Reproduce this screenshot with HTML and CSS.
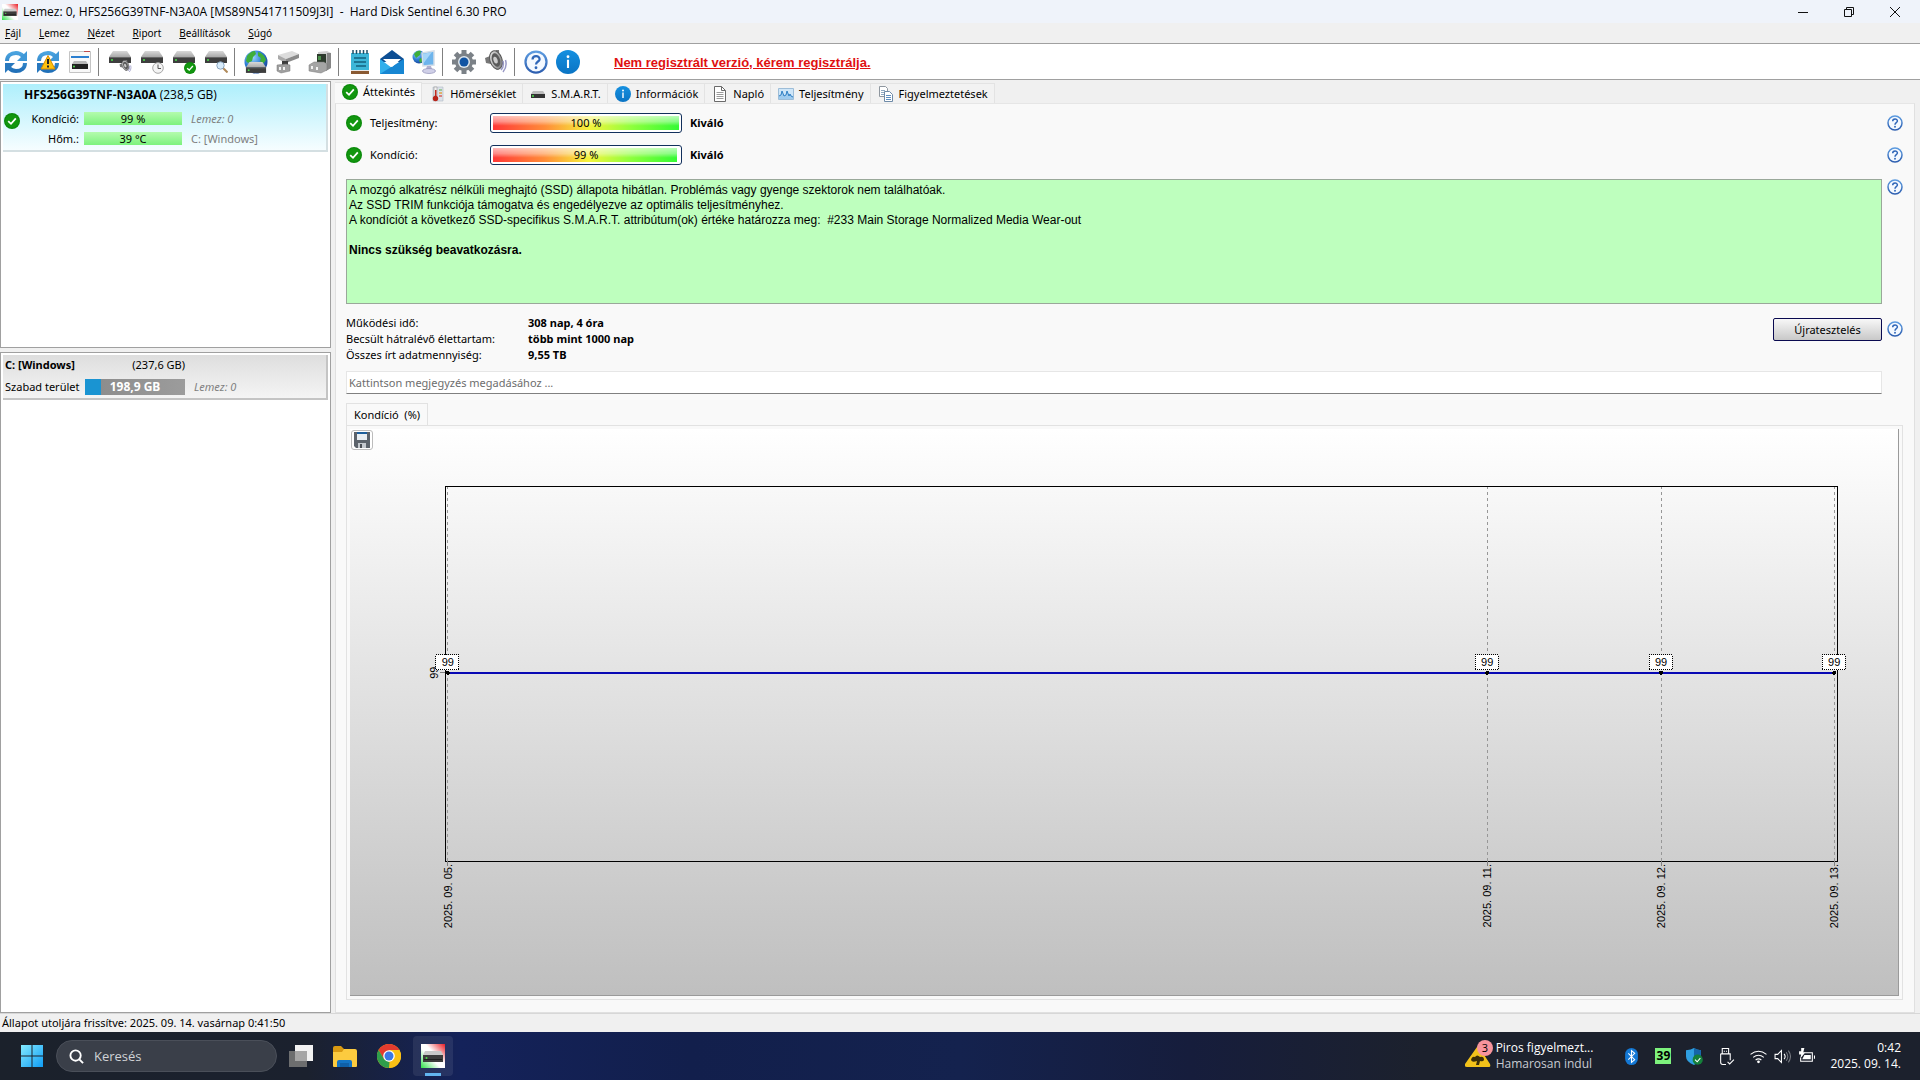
FILE: index.html
```html
<!DOCTYPE html>
<html lang="hu">
<head>
    <meta charset="utf-8">
    <meta name="viewport" content="width=device-width, initial-scale=1">
    <title>Hard Disk Sentinel 6.30 PRO</title>
    <link rel="stylesheet" href="styles.css">
</head>
<body>

<!-- icon sprite -->
<svg class="sprite" aria-hidden="true">
    <defs>
        <linearGradient id="g-blue" x1="0" y1="0" x2="0" y2="1"><stop offset="0" stop-color="#4aa3df"/><stop offset="1" stop-color="#2170b8"/></linearGradient>
        <linearGradient id="g-info" x1="0" y1="0" x2="0" y2="1"><stop offset="0" stop-color="#1590e0"/><stop offset="1" stop-color="#0a74c4"/></linearGradient>
        <linearGradient id="g-disk" x1="0" y1="0" x2="0" y2="1"><stop offset="0" stop-color="#d8d8d8"/><stop offset="1" stop-color="#a8a8a8"/></linearGradient>
        <linearGradient id="g-gray" x1="0" y1="0" x2="1" y2="1"><stop offset="0" stop-color="#eeeeee"/><stop offset="1" stop-color="#707070"/></linearGradient>
        <linearGradient id="g-help" x1="0" y1="0" x2="0" y2="1"><stop offset="0" stop-color="#5c9be0"/><stop offset="1" stop-color="#2e5fb0"/></linearGradient>
        <linearGradient id="g-app" x1="0" y1="1" x2="1" y2="0"><stop offset="0" stop-color="#2fe04a"/><stop offset=".42" stop-color="#ffffff"/><stop offset=".58" stop-color="#ffffff"/><stop offset="1" stop-color="#e81c24"/></linearGradient>
        <linearGradient id="g-win" x1="0" y1="0" x2="1" y2="1"><stop offset="0" stop-color="#84eaff"/><stop offset="1" stop-color="#0f9cf4"/></linearGradient>
        <radialGradient id="g-globe" cx=".35" cy=".3" r=".8"><stop offset="0" stop-color="#9fd8ff"/><stop offset=".5" stop-color="#2f7fd6"/><stop offset="1" stop-color="#123a8c"/></radialGradient>
    </defs>

    <symbol id="i-app" viewBox="0 0 24 24">
        <path fill="url(#g-app)" d="M0 0h24v24H0z"/>
        <path fill="#c9c9c9" d="M4 7h16l2 4H2z"/>
        <path fill="#3c3c3c" d="M2 11h20v7H2z"/>
        <path fill="#1e1e1e" d="M3 15h18v1H3z"/>
        <circle cx="5.500" cy="14" r="1" fill="#4be04b"/>
    </symbol>
    <symbol id="i-sync" viewBox="0 0 24 24">
        <path fill="none" stroke="url(#g-blue)" stroke-width="4" d="M3 11c0-5 4-8 9-8 3 0 5 1 7 3M21 13c0 5-4 8-9 8-3 0-5-1-7-3"/>
        <path fill="#3f98d8" d="M23 1v10H13z"/>
        <path fill="#2878be" d="M1 23V13h10z"/>
    </symbol>
    <symbol id="i-warn" viewBox="0 0 24 24">
        <path fill="#ffc20e" stroke="#d98c00" d="M12 5.500 19 19H5z" stroke-linejoin="round"/>
        <path stroke="#222" stroke-width="2" d="M12 9v5M12 15.500v2"/>
    </symbol>
    <symbol id="i-panel" viewBox="0 0 24 24">
        <path fill="#f8f8f8" stroke="#c4c4c4" d="M1.500 1.500h21v21h-21z"/>
        <path fill="#bf4a4a" d="M16 1h6v1h-6z"/>
        <path fill="#2b7fd0" d="M3 6h18v2H3z"/>
        <path fill="#b8b8b8" d="M6 11h12l2 3H4z"/>
        <path fill="#222" d="M4 14h16v5H4z"/>
        <circle cx="6" cy="16.500" r="1" fill="#54e054"/>
    </symbol>
    <symbol id="i-disk" viewBox="0 0 24 24">
        <path fill="url(#g-disk)" d="M5 1h14l4 6H1z"/>
        <path fill="#3e3e3e" d="M1 7h22v6H1z"/>
        <path fill="#666" d="M1 7h22v1H1z"/>
        <circle cx="4" cy="10" r="1" fill="#4be04b"/>
    </symbol>
    <symbol id="i-smalldisk" viewBox="0 0 16 16">
        <path fill="#bdbdbd" d="M3 5h10l2 3H1z"/>
        <path fill="#333" d="M1 8h14v4H1z"/>
        <circle cx="3" cy="10" r="1" fill="#4be04b"/>
    </symbol>
    <symbol id="i-speaker" viewBox="0 0 24 24">
        <path fill="#777" d="M1 8l5-2 6-6 3 0 1 18-3 2-6-6-5-1z"/>
        <ellipse cx="12" cy="10" rx="6" ry="9.500" fill="url(#g-gray)" stroke="#555" transform="rotate(-18 12 10)"/>
        <ellipse cx="12" cy="10" rx="4" ry="7" fill="#5a5a5a" transform="rotate(-18 12 10)"/>
        <ellipse cx="11.500" cy="10" rx="2" ry="3.500" fill="#ccc" transform="rotate(-18 12 10)"/>
        <path fill="none" stroke="#9a9ac6" stroke-width="1.500" d="M19 11c1 4 0 7-2 9M21.500 10c1.500 5 0 9-2.500 12"/>
    </symbol>
    <symbol id="i-clock" viewBox="0 0 12 12">
        <circle cx="6" cy="6" r="5.300" fill="#f4f4f4" stroke="#a6a6a6"/>
        <path fill="none" stroke="#555" d="M6 2.500V6.500H9"/>
    </symbol>
    <symbol id="i-check" viewBox="0 0 16 16">
        <circle cx="8" cy="8" r="8" fill="#0b8a0b"/>
        <circle cx="8" cy="8" r="6.800" fill="#12960f"/>
        <path fill="none" stroke="#fff" stroke-width="1.800" d="M4.200 8.200 7 10.800 11.800 5.400"/>
    </symbol>
    <symbol id="i-lens" viewBox="0 0 12 12">
        <path stroke="#b08a5a" stroke-width="2" d="M7 7l4.500 4.500"/>
        <circle cx="4.500" cy="4.500" r="3.700" fill="#d8ecfb" stroke="#8aa4bd"/>
    </symbol>
    <symbol id="i-globe" viewBox="0 0 24 24">
        <circle cx="12" cy="12" r="11.500" fill="url(#g-globe)"/>
        <path fill="#3fae3a" d="M3 6c2-3 5-5 8-5l1 3-3 3-1 4-4 2-2-2zM14 2c4 1 7 4 8 8l-3 4-3-3 1-3-3-2z"/>
    </symbol>
    <symbol id="i-plug" viewBox="0 0 24 24">
        <path fill="#dcdcdc" d="M2 5l14-4 7 3-13 5z"/>
        <path fill="#a9a9a9" d="M2 5l8 4v4l-8-4z"/>
        <path fill="#8a8a8a" d="M10 9l13-5v4l-13 5z"/>
        <path fill="#3c3c3c" d="M6 11h6v4H6z"/>
        <path fill="#9f9f9f" stroke="#777" stroke-width=".5" d="M1 15l9-1 4 1v6l-9 2-4-2z"/>
        <path fill="#f2f2f2" d="M3 17h2v3H3zM7 17h2v3H7z"/>
    </symbol>
    <symbol id="i-plug2" viewBox="0 0 24 24">
        <path fill="#cfcfcf" d="M10 2l9-1 4 2v15l-6 3-7-3z"/>
        <path fill="#868686" d="M19 3l4 0v15l-5 3z"/>
        <path fill="#2d3a2d" d="M9 4h9v9H9z"/>
        <path fill="#4c914c" d="M10 6h3v4h-3z"/>
        <path fill="#a5a5a5" stroke="#777" stroke-width=".5" d="M1 15l5-3h10l3 2v6l-6 3-12-2z"/>
        <path fill="#f2f2f2" d="M3 16h2v3H3zM8 17h2v3H8z"/>
    </symbol>
    <symbol id="i-note" viewBox="0 0 24 24">
        <path fill="#3cb6d8" d="M3 3h18v18H3z"/>
        <path fill="#8a5a33" d="M3 21h18v3H3z"/>
        <path fill="#e9e9e9" d="M3 20h18v1H3z"/>
        <path stroke="#1e5068" stroke-width="1.500" d="M5 0v4M8.500 0v4M12 0v4M15.500 0v4M19 0v4"/>
        <path stroke="#13617e" stroke-width="1.500" d="M6 8h12M6 12h12M8 16h10"/>
    </symbol>
    <symbol id="i-mail" viewBox="0 0 24 24">
        <path fill="#0e4f94" d="M0 9 12 0l12 9v3H0z"/>
        <path fill="#32b0ec" d="M0 9l12 9 12-9v15H0z"/>
        <path fill="#1786d2" d="M0 24 24 9v15z"/>
        <path fill="#fff" d="M3 9h18l-9 8z"/>
    </symbol>
    <symbol id="i-net" viewBox="0 0 24 24">
        <circle cx="7" cy="7" r="6.500" fill="url(#g-globe)"/>
        <path fill="#3fae3a" d="M2 4c2-3 5-4 7-3l-1 4-4 3zM8 8l3 1-2 4-2-2z"/>
        <path fill="#6db4ec" stroke="#d3dde8" stroke-width="1.500" d="M10 3l12-2v14l-11 1z"/>
        <path fill="#a5d5f8" d="M11 14 11 4l9-2z"/>
        <path fill="#b0b0d0" d="M15 16h4l1 3h-6z"/>
        <ellipse cx="17" cy="21" rx="6.500" ry="2.500" fill="#d0d0e8" stroke="#9090b8" stroke-width=".7"/>
    </symbol>
    <symbol id="i-gear" viewBox="0 0 24 24">
        <circle cx="12" cy="12" r="9" fill="#7b8187"/>
        <path stroke="#7b8187" stroke-width="5" d="M12 0v24M0 12h24M3.500 3.500l17 17M20.500 3.500l-17 17"/>
        <circle cx="12" cy="12" r="6" fill="#dfe7ee"/>
        <circle cx="12" cy="12" r="4.500" fill="#1154a3"/>
    </symbol>
    <symbol id="i-help" viewBox="0 0 16 16">
        <circle cx="8" cy="8" r="7" fill="#f4f9ff" stroke="url(#g-help)" stroke-width="1.500"/>
        <path fill="none" stroke="#2f66b8" stroke-width="1.500" d="M5.700 6.300c0-3 4.700-3 4.700-.2C10.400 7.700 8 7.700 8 9.700"/>
        <circle cx="8" cy="11.800" r=".95" fill="#2f66b8"/>
    </symbol>
    <symbol id="i-info" viewBox="0 0 16 16">
        <circle cx="8" cy="8" r="8" fill="url(#g-info)"/>
        <path fill="#fff" d="M7.300 6.500h1.400V12H7.300z"/>
        <circle cx="8" cy="4.500" r=".95" fill="#fff"/>
    </symbol>
    <symbol id="i-temp" viewBox="0 0 16 16">
        <path fill="#dce2ea" stroke="#b0b8c2" stroke-width=".6" d="M4 1h10v14H4z"/>
        <path fill="#9cc89c" d="M10 3h3v2h-3z"/>
        <path fill="#e0b36a" d="M10 6h3v2h-3z"/>
        <path fill="#d98080" d="M10 9h3v2h-3z"/>
        <path fill="#f2f2f2" stroke="#999" stroke-width=".6" d="M5 1h3v9H5z"/>
        <path fill="#c22a1e" d="M6 4h1.500v7H6z"/>
        <circle cx="6.500" cy="12.500" r="2.700" fill="#b8251a"/>
    </symbol>
    <symbol id="i-doc" viewBox="0 0 16 16">
        <path fill="#fff" stroke="#6a6a6a" d="M2.500.5h7l4 4v11h-11z"/>
        <path fill="none" stroke="#6a6a6a" d="M9.500.5v4h4"/>
        <path stroke="#9a9a9a" d="M4.500 6.500h7M4.500 8.500h7M4.500 10.500h7M4.500 12.500h7"/>
    </symbol>
    <symbol id="i-graph" viewBox="0 0 16 16">
        <path fill="#cfe6f8" stroke="#9dbdd8" d="M.5 2.500h15v11H.5z"/>
        <path fill="#9fcbee" d="M1 13v-3l2-1 1-4 2 5 2-1 1-4 2 5 1-2 1 2 2 1v2z"/>
        <path fill="none" stroke="#2f7fc4" d="M1 10l2-1 1-4 2 5 2-1 1-4 2 5 1-2 1 2 2 1"/>
    </symbol>
    <symbol id="i-copy" viewBox="0 0 16 16">
        <path fill="#fff" stroke="#8f979f" d="M1.500.5h6l2 2v8h-8z"/>
        <path stroke="#8fa8c0" d="M3 4.500h4M3 6.500h3M3 8.500h3"/>
        <path fill="#fff" stroke="#6f8ba8" d="M6.500 5.500h5l3 3v7h-8z"/>
        <path stroke="#5f8fc0" d="M8 9.500h5M8 11.500h5M8 13.500h5"/>
    </symbol>
    <symbol id="i-save" viewBox="0 0 16 16">
        <path fill="#5c636b" d="M0 0h16v16H2l-2-2z"/>
        <path fill="#1d5f9c" d="M3 0h10v2H3z"/>
        <path fill="#e8eef3" d="M3 2h10v6H3z"/>
        <path fill="#c4c9ce" d="M4 11h8v5H4z"/>
        <path fill="#4a4f55" d="M6 12h2v4H6z"/>
    </symbol>
</svg>

<header class="titlebar">
    <svg class="app-icon"><use href="#i-app"/></svg>
    <span class="title">Lemez: 0, HFS256G39TNF-N3A0A [MS89N541711509J3I] &nbsp;-&nbsp; Hard Disk Sentinel 6.30 PRO</span>
    <div class="win-buttons">
        <button type="button" aria-label="Kis méret"><svg viewBox="0 0 10 10"><path d="M0 5.500h10"/></svg></button>
        <button type="button" aria-label="Előző méret"><svg viewBox="0 0 10 10"><path d="M.5 2.500h7v7h-7zM2.500 2.500V.5h7v7h-2"/></svg></button>
        <button type="button" aria-label="Bezárás"><svg viewBox="0 0 10 10"><path d="M0 0l10 10M10 0 0 10"/></svg></button>
    </div>
</header>

<nav class="menubar">
    <button type="button"><u>F</u>ájl</button>
    <button type="button"><u>L</u>emez</button>
    <button type="button"><u>N</u>ézet</button>
    <button type="button"><u>R</u>iport</button>
    <button type="button"><u>B</u>eállítások</button>
    <button type="button"><u>S</u>úgó</button>
</nav>

<div class="toolbar">
    <button type="button" aria-label="Frissítés"><svg viewBox="0 0 24 24"><use href="#i-sync"/></svg></button>
    <button type="button" aria-label="Figyelmeztetések frissítése"><svg viewBox="0 0 24 24"><use href="#i-sync"/><use href="#i-warn"/></svg></button>
    <button type="button" aria-label="Nézet"><svg viewBox="0 0 24 24"><use href="#i-panel"/></svg></button>
    <span class="sep"></span>
    <button type="button" aria-label="Hang"><svg viewBox="0 0 24 24"><use href="#i-disk"/><use href="#i-speaker" x="11" y="10" width="13" height="13"/></svg></button>
    <button type="button" aria-label="Időzítés"><svg viewBox="0 0 24 24"><use href="#i-disk"/><use href="#i-clock" x="12" y="12" width="12" height="12"/></svg></button>
    <button type="button" aria-label="Teszt"><svg viewBox="0 0 24 24"><use href="#i-disk"/><use href="#i-check" x="12" y="12" width="12" height="12"/></svg></button>
    <button type="button" aria-label="Felülvizsgálat"><svg viewBox="0 0 24 24"><use href="#i-disk"/><use href="#i-lens" x="12" y="11" width="12" height="12"/></svg></button>
    <span class="sep"></span>
    <button type="button" aria-label="Hálózati lemez"><svg viewBox="0 0 24 24"><use href="#i-globe"/><use href="#i-disk" x="1" y="11" width="22" height="22"/></svg></button>
    <button type="button" aria-label="Csatlakoztatás"><svg viewBox="0 0 24 24"><use href="#i-plug"/></svg></button>
    <button type="button" aria-label="Leválasztás"><svg viewBox="0 0 24 24"><use href="#i-plug2"/></svg></button>
    <span class="sep"></span>
    <button type="button" aria-label="Riport"><svg viewBox="0 0 24 24"><use href="#i-note"/></svg></button>
    <button type="button" aria-label="E-mail"><svg viewBox="0 0 24 24"><use href="#i-mail"/></svg></button>
    <button type="button" aria-label="Hálózat"><svg viewBox="0 0 24 24"><use href="#i-net"/></svg></button>
    <span class="sep"></span>
    <button type="button" aria-label="Beállítások"><svg viewBox="0 0 24 24"><use href="#i-gear"/></svg></button>
    <button type="button" aria-label="Hangjelzés"><svg viewBox="0 0 24 24"><use href="#i-speaker"/></svg></button>
    <span class="sep"></span>
    <button type="button" aria-label="Súgó"><svg viewBox="0 0 24 24"><use href="#i-help" width="24" height="24"/></svg></button>
    <button type="button" aria-label="Információ"><svg viewBox="0 0 24 24"><use href="#i-info" width="24" height="24"/></svg></button>
    <a class="register" href="#">Nem regisztrált verzió, kérem regisztrálja.</a>
</div>

<div class="workspace">
    <aside class="sidebar">
        <section class="list disks">
            <div class="disk">
                <div class="disk-name"><b>HFS256G39TNF-N3A0A</b> (238,5 GB)</div>
                <div class="disk-body">
                    <svg class="ico16"><use href="#i-check"/></svg>
                    <div class="disk-grid">
                        <span class="key">Kondíció:</span><span class="bar">99 %</span><i>Lemez: 0</i>
                        <span class="key">Hőm.:</span><span class="bar">39 °C</span><span class="dim">C: [Windows]</span>
                    </div>
                </div>
            </div>
        </section>
        <section class="list volumes">
            <div class="volume">
                <b>C: [Windows]</b><span class="size">(237,6 GB)</span><span></span>
                <span>Szabad terület</span><span class="usage">198,9 GB</span><i>Lemez: 0</i>
            </div>
        </section>
    </aside>

    <main class="main">
        <div class="tabs" role="tablist">
            <button type="button" role="tab" class="tab active" aria-selected="true"><svg class="ico16"><use href="#i-check"/></svg>Áttekintés</button>
            <button type="button" role="tab" class="tab"><svg class="ico16"><use href="#i-temp"/></svg>Hőmérséklet</button>
            <button type="button" role="tab" class="tab"><svg class="ico16"><use href="#i-smalldisk"/></svg>S.M.A.R.T.</button>
            <button type="button" role="tab" class="tab"><svg class="ico16"><use href="#i-info"/></svg>Információk</button>
            <button type="button" role="tab" class="tab"><svg class="ico16"><use href="#i-doc"/></svg>Napló</button>
            <button type="button" role="tab" class="tab"><svg class="ico16"><use href="#i-graph"/></svg>Teljesítmény</button>
            <button type="button" role="tab" class="tab"><svg class="ico16"><use href="#i-copy"/></svg>Figyelmeztetések</button>
        </div>

        <div class="page">
            <div class="status-row">
                <svg class="ico16"><use href="#i-check"/></svg>
                <span class="status-label">Teljesítmény:</span>
                <div class="meter"><div class="fill" style="width:100%"></div><span>100 %</span></div>
                <b>Kiváló</b>
                <button type="button" class="help" aria-label="Súgó"><svg class="ico16"><use href="#i-help"/></svg></button>
            </div>
            <div class="status-row">
                <svg class="ico16"><use href="#i-check"/></svg>
                <span class="status-label">Kondíció:</span>
                <div class="meter"><div class="fill" style="width:99%"></div><span>99 %</span></div>
                <b>Kiváló</b>
                <button type="button" class="help" aria-label="Súgó"><svg class="ico16"><use href="#i-help"/></svg></button>
            </div>

            <div class="with-help">
                <div class="report">
                    <p>A mozgó alkatrész nélküli meghajtó (SSD) állapota hibátlan. Problémás vagy gyenge szektorok nem találhatóak.</p>
                    <p>Az SSD TRIM funkciója támogatva és engedélyezve az optimális teljesítményhez.</p>
                    <p>A kondíciót a következő SSD-specifikus S.M.A.R.T. attribútum(ok) értéke határozza meg: &nbsp;#233 Main Storage Normalized Media Wear-out</p>
                    <p class="verdict"><b>Nincs szükség beavatkozásra.</b></p>
                </div>
                <button type="button" class="help" aria-label="Súgó"><svg class="ico16"><use href="#i-help"/></svg></button>
            </div>

            <div class="facts-row">
                <dl class="facts">
                    <dt>Működési idő:</dt><dd>308 nap, 4 óra</dd>
                    <dt>Becsült hátralévő élettartam:</dt><dd>több mint 1000 nap</dd>
                    <dt>Összes írt adatmennyiség:</dt><dd>9,55 TB</dd>
                </dl>
                <button type="button" class="retest">Újratesztelés</button>
                <button type="button" class="help" aria-label="Súgó"><svg class="ico16"><use href="#i-help"/></svg></button>
            </div>

            <input class="comment" type="text" aria-label="Megjegyzés" placeholder="Kattintson megjegyzés megadásához ...">

            <div class="chart-tabs" role="tablist">
                <button type="button" role="tab" class="chart-tab" aria-selected="true">Kondíció &nbsp;(%)</button>
            </div>
            <div class="chart-frame">
                <div class="chart">
                    <button type="button" class="save" aria-label="Mentés"><svg class="ico16"><use href="#i-save"/></svg></button>
                    <svg class="plot">
                        <g class="grid">
                            <line x1="0.2%" y1="0" x2="0.2%" y2="100%"/>
                            <line x1="74.87%" y1="0" x2="74.87%" y2="100%"/>
                            <line x1="87.36%" y1="0" x2="87.36%" y2="100%"/>
                            <line x1="99.8%" y1="0" x2="99.8%" y2="100%"/>
                        </g>
                        <rect class="frame" width="100%" height="100%"/>
                        <line class="series" x1="0.2%" y1="49.8%" x2="99.8%" y2="49.8%"/>
                        <!-- value axis -->
                        <svg x="0" y="49.8%" class="pt"><line class="tick" x1="-5" x2="0"/><text class="axis" transform="rotate(-90)" x="-6" y="-7">99</text></svg>
                        <!-- points -->
                        <svg x="0.2%" y="49.8%" class="pt"><rect class="box" x="-12" y="-18" width="23" height="15"/><text class="val" y="-7">99</text><circle r="2"/></svg>
                        <svg x="74.87%" y="49.8%" class="pt"><rect class="box" x="-12" y="-18" width="23" height="15"/><text class="val" y="-7">99</text><circle r="2"/></svg>
                        <svg x="87.36%" y="49.8%" class="pt"><rect class="box" x="-12" y="-18" width="23" height="15"/><text class="val" y="-7">99</text><circle r="2"/></svg>
                        <svg x="99.8%" y="49.8%" class="pt"><rect class="box" x="-12" y="-18" width="23" height="15"/><text class="val" y="-7">99</text><circle r="2"/></svg>
                        <!-- dates -->
                        <svg x="0.2%" y="100%" class="pt"><line class="tick" y2="5"/><text class="date" transform="rotate(-90)" x="-3" y="4">2025. 09. 05.</text></svg>
                        <svg x="74.87%" y="100%" class="pt"><line class="tick" y2="5"/><text class="date" transform="rotate(-90)" x="-3" y="4">2025. 09. 11.</text></svg>
                        <svg x="87.36%" y="100%" class="pt"><line class="tick" y2="5"/><text class="date" transform="rotate(-90)" x="-3" y="4">2025. 09. 12.</text></svg>
                        <svg x="99.8%" y="100%" class="pt"><line class="tick" y2="5"/><text class="date" transform="rotate(-90)" x="-3" y="4">2025. 09. 13.</text></svg>
                    </svg>
                </div>
            </div>
        </div>
    </main>
</div>

<footer class="statusbar">Állapot utoljára frissítve: 2025. 09. 14. vasárnap 0:41:50</footer>

<div class="taskbar">
    <button type="button" class="task start" aria-label="Start">
        <svg viewBox="0 0 24 24"><path fill="url(#g-win)" d="M1 1h10.500v10.500H1zM12.500 1H23v10.500H12.500zM1 12.500h10.500V23H1zM12.500 12.500H23V23H12.500z"/></svg>
    </button>
    <label class="search">
        <svg viewBox="0 0 16 16"><circle cx="7" cy="7" r="5.500"/><path d="M11 11l4 4"/></svg>
        <input type="text" placeholder="Keresés" aria-label="Keresés">
    </label>
    <button type="button" class="task" aria-label="Feladatnézet">
        <svg viewBox="0 0 24 24"><path fill="#f2f2f2" d="M6 1h18v16H6z"/><path fill="#777" opacity=".9" d="M0 7h18v16H0z"/><path fill="#a6a6a6" d="M6 7h12v10H6z"/></svg>
    </button>
    <button type="button" class="task" aria-label="Fájlkezelő">
        <svg viewBox="0 0 24 24"><path fill="#d99a12" d="M0 4q0-2 2-2h6l3 3v5H0z"/><path fill="#fccb3f" d="M0 8h9l2-3h11q2 0 2 2v15q0 1-1 1H1q-1 0-1-1z"/><path fill="#1373c4" d="M4 23v-5q0-2 2-2h11q2 0 2 2v5z"/><path fill="#0f5fa8" d="M7 19h9v4H7z"/></svg>
    </button>
    <button type="button" class="task" aria-label="Chrome">
        <svg viewBox="0 0 24 24"><circle cx="12" cy="12" r="12" fill="#fbc116"/><path fill="#e33b2e" d="M1.600 6A12 12 0 0 1 22.400 6H12v6l-5.200 3z"/><path fill="#2f9e4b" d="M1.600 6 7 15l5 3 .5 0L12 24A12 12 0 0 1 1.600 6z"/><path fill="#fbc116" d="M22.400 6A12 12 0 0 1 12 24l5.200-9L16 6z"/><circle cx="12" cy="12" r="5.800" fill="#fff"/><circle cx="12" cy="12" r="4.500" fill="#3b78e7"/></svg>
    </button>
    <button type="button" class="task current" aria-label="Hard Disk Sentinel"><svg><use href="#i-app"/></svg></button>

    <button type="button" class="alert">
        <svg viewBox="0 0 28 28"><path fill="#f2c21a" d="M12 7q1-2 2 0l11 17q1 3-1 3H2q-3 0-2-3z"/><path fill="#3a2e08" d="M6 20q1-4 4-3 2-3 5 0 4-1 4 3-1 2-4 1l-1 4h-3l1-4q-5 2-6-1z"/><circle cx="20" cy="8" r="8" fill="#f7949c"/><text x="20" y="12">3</text></svg>
        <span><em>Piros figyelmezt...</em>Hamarosan indul</span>
    </button>
    <div class="tray">
        <svg viewBox="0 0 16 16"><rect x="2" width="12" height="16" rx="6" fill="#1478d4"/><path class="ln" d="M5 5l6 6-3 2.500v-11L11 5l-6 6"/></svg>
        <span class="temp">39</span>
        <svg viewBox="0 0 16 16"><path fill="#2f9fe0" d="M7.500 0Q10 2 14 2v6q0 5-6.500 8Q0 13 0 8V2q5 0 7.500-2z"/><path fill="#1565a8" d="M7.500 0Q10 2 14 2v6H7.500z"/><circle cx="11" cy="11" r="4.800" fill="#15803a"/><path class="ln" d="M8.500 11l2 2 3-3.500"/></svg>
        <svg viewBox="0 0 16 16"><path class="ln" d="M4 .5h6v5H4zM6 2.500v1M8 2.500v1M2.500 5.500h9v6M2.500 5.500v8q0 2 2 2h3M9 13l2 2 4-4"/></svg>
        <div class="system">
            <svg viewBox="0 0 16 16"><path class="ln" d="M.5 6q7.500-6 15 0M3 8.800q5-4 10 0M5.300 11.300q2.700-2.200 5.400 0"/><circle cx="8" cy="13" r="1.300" fill="#fff"/></svg>
            <svg viewBox="0 0 16 16"><path class="ln" d="M1 6h2.500L7 2.500v11L3.500 10H1zM9.500 5.500q2 2.500 0 5"/><path class="ln faint" d="M11.500 4q3 4 0 8M13.500 2.500q4 5.500 0 11"/></svg>
            <svg viewBox="0 0 16 16"><path class="ln" d="M6 4.500h7.500v8h-11v-3"/><path fill="#fff" d="M15 7h1v3h-1zM6 6.500h6v4H4zM3 0v3H1v3h2l-1 4 5-6H5l1-4z"/></svg>
        </div>
        <time>0:42<br>2025. 09. 14.</time>
    </div>
</div>

</body>
</html>
```

FILE: styles.css
```css
* {
    box-sizing: border-box;
}

body {
    margin: 0;
    min-height: 100vh;
    display: flex;
    flex-direction: column;
    background: #f0f0f0;
    color: #000;
    font-family: "Noto Sans", "Open Sans", sans-serif;
    font-size: 11px;
    line-height: 16px;
}

button,
input {
    margin: 0;
    padding: 0;
    border: 0;
    background: none;
    color: inherit;
    font: inherit;
}

svg {
    display: block;
    flex: none;
}

.sprite {
    position: absolute;
    width: 0;
    height: 0;
}

.ico16 {
    width: 16px;
    height: 16px;
}

/* title + menu */
.titlebar {
    display: flex;
    align-items: center;
    height: 23px;
    padding-left: 2px;
    background: #eff3fa;
    font-family: "Open Sans", "Noto Sans", sans-serif;
    font-size: 12px;
}

.app-icon {
    width: 16px;
    height: 16px;
}

.title {
    flex: 1;
    padding-left: 5px;
}

.win-buttons {
    display: flex;
    padding-right: 2px;
}

.win-buttons button {
    width: 46px;
    height: 22px;
    display: flex;
    align-items: center;
    justify-content: center;
}

.win-buttons svg {
    width: 10px;
    height: 10px;
    overflow: visible;
    fill: none;
    stroke: #111;
}

.menubar {
    display: flex;
    gap: 18px;
    height: 20px;
    padding-left: 5px;
    font-size: 10px;
}

/* toolbar */
.toolbar {
    display: flex;
    align-items: center;
    height: 37px;
    background: #fff;
    border-top: 1px solid #a0a0a0;
    border-bottom: 1px solid #a0a0a0;
}

.toolbar button {
    width: 32px;
    height: 32px;
    display: flex;
    align-items: center;
    justify-content: center;
}

.toolbar svg {
    width: 24px;
    height: 24px;
}

.sep {
    width: 8px;
    height: 28px;
    background: linear-gradient(#808080, #808080) 2px 0 / 1px 100% no-repeat;
}

.register {
    margin-left: 30px;
    padding-top: 2px;
    color: #e01010;
    font: bold 13px "Liberation Sans", Arial, sans-serif;
}

/* layout */
.workspace {
    flex: 1;
    display: flex;
    padding-top: 1px;
}

.sidebar {
    width: 331px;
    display: flex;
    flex-direction: column;
    gap: 4px;
}

.list {
    background: #fff;
    border: 1px solid #a0a0a0;
    padding: 2px;
}

.disks {
    height: 267px;
}

.volumes {
    flex: 1;
}

.list i,
.dim {
    padding-left: 4px;
    color: #808080;
}

/* disk item */
.disk {
    padding: 3px 0 3px 1px;
    background: linear-gradient(#aeeffc, #f6fdff);
    border-right: 2px solid #d4dfe2;
    border-bottom: 2px solid #d4dfe2;
}

.disk-name {
    padding-left: 20px;
    font-family: "Open Sans", "Noto Sans", sans-serif;
    font-size: 12px;
}

.disk-body {
    display: flex;
    padding-top: 8px;
}

.disk-body .ico16 {
    margin-top: 2px;
}

.disk-grid {
    display: grid;
    grid-template-columns: 59px 98px auto;
    column-gap: 5px;
    row-gap: 4px;
}

.key {
    text-align: right;
}

.bar {
    height: 13px;
    margin-top: 1px;
    line-height: 13px;
    text-align: center;
    background: linear-gradient(#b4fbae, #7df27d);
}

/* volume item */
.volume {
    display: grid;
    grid-template-columns: 75px 100px auto;
    column-gap: 5px;
    row-gap: 6px;
    padding: 2px 0 3px 2px;
    background: linear-gradient(#dedede, #f4f4f4);
    border-right: 2px solid #c4c4c4;
    border-bottom: 2px solid #c4c4c4;
    white-space: nowrap;
}

.size {
    text-align: right;
}

.usage {
    color: #fff;
    font-size: 12px;
    font-weight: bold;
    line-height: 15px;
    text-align: center;
    background: linear-gradient(90deg, #1a94d2 16%, #8d8d8d 16%, #9c9c9c);
}

/* tabs */
.main {
    flex: 1;
    display: flex;
    flex-direction: column;
    padding: 1px 5px 0 4px;
}

.tabs {
    display: flex;
    align-items: flex-end;
    height: 21px;
}

.tab {
    display: flex;
    align-items: center;
    gap: 5px;
    height: 20px;
    padding: 0 6px 0 7px;
    background: #f2f2f2;
    border: 1px solid #e3e3e3;
    border-left: 0;
    border-bottom: 0;
}

.tab.active {
    height: 21px;
    padding-bottom: 3px;
    background: #f9f9f9;
}

.page {
    flex: 1;
    display: flex;
    flex-direction: column;
    padding: 9px 0 12px 10px;
    background: #f9f9f9;
    border: 1px solid #e0e0e0;
    border-top-color: #e6e6e6;
}

/* status rows */
.status-row {
    display: flex;
    align-items: center;
    height: 20px;
    margin-bottom: 12px;
}

.status-label {
    width: 128px;
    padding-left: 8px;
}

.meter {
    display: grid;
    width: 192px;
    height: 20px;
    margin-right: 8px;
    padding: 2px;
    background: #fff;
    border: 1px solid #12305c;
    border-radius: 3px;
    text-align: center;
    line-height: 14px;
}

.meter > * {
    grid-area: 1 / 1;
}

.fill {
    background:
        linear-gradient(rgba(255, 255, 255, .65), rgba(255, 255, 255, .4) 40%, rgba(255, 255, 255, 0) 70%),
        linear-gradient(90deg, #ff3838, #ff8c38 28%, #f4f43c 52%, #8cff3c 75%, #34fa34);
}

.help {
    width: 16px;
    height: 16px;
    margin-left: auto;
    margin-right: 11px;
}

.with-help,
.facts-row {
    display: flex;
    gap: 5px;
}

.with-help {
    margin-top: 2px;
}

.report {
    flex: 1;
    height: 125px;
    padding: 3px 2px;
    background: #beffbe;
    border: 1px solid #9aa89a;
    font: 12px/15px "Liberation Sans", Arial, sans-serif;
}

.report p {
    margin: 0;
}

.report .verdict {
    margin-top: 15px;
}

.facts-row {
    margin-top: 11px;
}

.facts {
    flex: 1;
    display: grid;
    grid-template-columns: 182px auto;
    grid-auto-rows: 16px;
    margin: 0;
}

.facts dd {
    margin: 0;
    font-weight: bold;
}

.retest {
    width: 109px;
    height: 23px;
    margin-top: 3px;
    background: linear-gradient(#f8f8f8, #c8c8c8);
    border: 1px solid #0a0a50;
    border-radius: 2px;
}

.facts-row .help {
    margin-top: 6px;
}

.comment {
    height: 23px;
    margin: 8px 32px 0 0;
    padding: 0 2px;
    background: #fff;
    border: 1px solid #e6e6e6;
    border-bottom-color: #808080;
}

.comment::placeholder {
    color: #6d6d6d;
    opacity: 1;
}

/* chart */
.chart-tabs {
    display: flex;
    margin-top: 9px;
}

.chart-tab {
    height: 22px;
    padding: 0 7px;
    border: 1px solid #e2e2e2;
    border-bottom: 0;
}

.chart-frame {
    flex: 1;
    display: flex;
    margin-right: 11px;
    padding: 3px;
    border: 1px solid #e2e2e2;
}

.chart {
    flex: 1;
    display: flex;
    flex-direction: column;
    padding: 1px 61px 134px 95px;
    background: linear-gradient(#fff, #bfbfbf);
    border-right: 1px solid #9a9a9a;
    border-bottom: 1px solid #9a9a9a;
}

.save {
    display: flex;
    align-items: center;
    justify-content: center;
    width: 22px;
    height: 20px;
    margin: 0 0 36px -94px;
    background: #fff;
    border: 1px solid #bcbcbc;
    border-radius: 3px;
}

.plot {
    flex: 1;
    width: 100%;
    overflow: visible;
    font: 11px "Liberation Sans", Arial, sans-serif;
    shape-rendering: crispEdges;
}

.pt {
    overflow: visible;
}

.grid line {
    stroke: #979797;
    stroke-dasharray: 3 3;
}

.tick {
    stroke: #808080;
}

.frame {
    fill: none;
    stroke: #000;
}

.series {
    stroke: #0808b4;
    stroke-width: 2;
}

.box {
    fill: #fff;
    stroke: #000;
    stroke-dasharray: 1 1;
}

.val {
    text-anchor: middle;
}

.date {
    text-anchor: end;
}

.statusbar {
    height: 19px;
    padding: 1px 2px;
    border-top: 1px solid #d7d7d7;
}

/* taskbar */
.taskbar {
    display: flex;
    align-items: center;
    height: 48px;
    padding: 0 19px 0 12px;
    background: linear-gradient(90deg, #1b212b, #1b212e 16%, #14225a 24%, #121f4c 36%, #14224e 50%, #161d3c 62%, #1c212d 74%);
    color: #fff;
    font-family: "Open Sans", "Noto Sans", sans-serif;
    font-size: 12px;
    gap: 4px;
}

.task {
    display: flex;
    align-items: center;
    justify-content: center;
    width: 40px;
    height: 40px;
    border-radius: 4px;
}

.task svg {
    width: 24px;
    height: 24px;
}

.task.current {
    background: rgba(255, 255, 255, .08) linear-gradient(#62b5f0, #62b5f0) 50% 100% / 16px 3px no-repeat;
}

.search {
    display: flex;
    align-items: center;
    gap: 10px;
    width: 221px;
    height: 32px;
    padding-left: 12px;
    background: #3a3f49;
    border: 1px solid #4a4f59;
    border-radius: 16px;
}

.search svg {
    width: 15px;
    height: 15px;
    fill: none;
    stroke: #fff;
    stroke-width: 2;
}

.search input {
    width: 160px;
    font-size: 13px;
}

.search input::placeholder {
    color: #d0d2d6;
    opacity: 1;
}

.alert {
    display: flex;
    align-items: center;
    gap: 3px;
    margin-left: auto;
    text-align: left;
    color: #c9ccd2;
}

.alert svg {
    width: 28px;
    height: 28px;
    margin-bottom: 4px;
}

.alert text {
    text-anchor: middle;
    font-size: 11px;
}

.alert em {
    display: block;
    font-style: normal;
    color: #fff;
}

.tray {
    display: flex;
    align-items: center;
    gap: 15px;
    margin-left: 26px;
}

.tray svg {
    width: 17px;
    height: 17px;
}

.system {
    display: flex;
    gap: 7px;
}

.temp {
    width: 16px;
    background: #7df27d;
    color: #000;
    font-weight: bold;
    text-align: center;
}

.ln {
    fill: none;
    stroke: #fff;
}

.faint {
    opacity: .4;
}

time {
    text-align: right;
}
```
